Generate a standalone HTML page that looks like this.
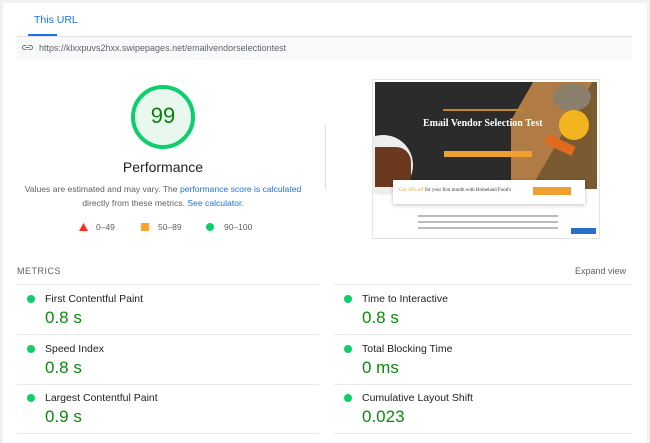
<!DOCTYPE html>
<html><head><style>
*{margin:0;padding:0;box-sizing:border-box}
body{width:650px;height:435px;background:#f1f1f1;font-family:"Liberation Sans",Arial,sans-serif;position:relative;overflow:hidden}
.card{position:absolute;left:3px;top:3px;width:644px;height:440px;background:#fff}
.a{position:absolute}
.t{white-space:nowrap}
.dot{width:8px;height:8px;border-radius:50%;background:#0cce6b}
.mt{font-size:10.5px;color:#212121}
.mv{font-size:17px;color:#0c8a0c}
.hl{height:1px;background:#ebebeb}
</style></head><body>
<div class="card"></div>
<div class="a t" style="left:34px;top:14px;font-size:10.5px;color:#1a73e8">This URL</div>
<div class="a" style="left:28px;top:34px;width:29px;height:2px;background:#1a73e8"></div>
<div class="a" style="left:17px;top:36px;width:615px;height:1px;background:#e0e0e0"></div>
<div class="a" style="left:17px;top:37px;width:615px;height:23px;background:#f8f9fa"></div>
<svg class="a" style="left:22px;top:44px" width="11" height="7" viewBox="0 0 22 14"><path d="M9 3H5a4 4 0 0 0 0 8h4M13 3h4a4 4 0 0 1 0 8h-4M7 7h8" stroke="#757575" stroke-width="2" fill="none"/></svg>
<div class="a t" style="left:39px;top:43px;font-size:9px;color:#5f6368">https://klxxpuvs2hxx.swipepages.net/emailvendorselectiontest</div>

<svg class="a" style="left:129px;top:83px" width="68" height="68"><circle cx="34" cy="34" r="30" fill="#e8f8ee" stroke="#0cce6b" stroke-width="4"/></svg>
<div class="a t" style="left:129px;top:103px;width:68px;text-align:center;font-size:22px;color:#0c7d0c">99</div>
<div class="a t" style="left:63px;top:159px;width:200px;text-align:center;font-size:14px;color:#212121">Performance</div>
<div class="a t" style="left:13px;top:182px;width:300px;text-align:center;font-size:8.6px;color:#616161;line-height:14px">Values are estimated and may vary. The <span style="color:#1a73e8">performance score is calculated</span><br>directly from these metrics. <span style="color:#1a73e8">See calculator.</span></div>
<svg class="a" style="left:79px;top:223px" width="9" height="8"><path d="M4.5 0L9 8H0z" fill="#ff2d1e"/></svg>
<div class="a t" style="left:96px;top:222px;font-size:8.5px;color:#616161">0–49</div>
<div class="a" style="left:141px;top:223px;width:8px;height:8px;background:#ffa426"></div>
<div class="a t" style="left:158px;top:222px;font-size:8.5px;color:#616161">50–89</div>
<div class="a dot" style="left:206px;top:223px"></div>
<div class="a t" style="left:224px;top:222px;font-size:8.5px;color:#616161">90–100</div>

<div class="a" style="left:325px;top:125px;width:1px;height:65px;background:#e0e0e0"></div>

<div class="a" style="left:372px;top:79px;width:228px;height:160px;border:1px solid #e4e4e4;background:#fff;overflow:hidden">
 <div class="a" style="left:2px;top:2px;width:222px;height:107px;background:#2b2b2b"></div>
 <div class="a" style="left:138px;top:2px;width:86px;height:107px;background:linear-gradient(120deg,#2b2b2b 0 15%,#b07b45 15% 55%,#7a5a30 55%)"></div>
 <div class="a" style="left:180px;top:3px;width:38px;height:28px;border-radius:50%;background:#8a7f6a"></div>
 <div class="a" style="left:186px;top:30px;width:30px;height:30px;border-radius:50%;background:#f2b51f"></div>
 <div class="a" style="left:172px;top:60px;width:30px;height:10px;background:#e06a1e;transform:rotate(25deg)"></div>
 <div class="a" style="left:-20px;top:55px;width:60px;height:60px;border-radius:50%;background:#eee"></div>
 <div class="a" style="left:2px;top:67px;width:36px;height:40px;background:#6b3a1e;border-radius:0 15px 0 0"></div>
 <div class="a t" style="left:50px;top:38px;font-family:'Liberation Serif',serif;font-size:10px;color:#fff;font-weight:bold">Email Vendor Selection Test</div>
 <div class="a" style="left:70px;top:29px;width:80px;height:2px;background:#c08a2a"></div>
 <div class="a" style="left:71px;top:71px;width:88px;height:6px;background:#f0a030"></div>
 <div class="a" style="left:20px;top:100px;width:192px;height:24px;background:#fff;box-shadow:0 1px 4px rgba(0,0,0,.25)"></div>
 <div class="a t" style="left:26px;top:108px;font-family:'Liberation Serif',serif;font-size:5px;color:#333"><span style="color:#f0a030">Get 50% off</span> for your first month with Homeland Food's</div>
 <div class="a" style="left:160px;top:107px;width:38px;height:8px;background:#f0a030"></div>
 <div class="a" style="left:45px;top:135px;width:140px;height:2px;background:#bbb"></div>
 <div class="a" style="left:45px;top:141px;width:140px;height:2px;background:#bbb"></div>
 <div class="a" style="left:45px;top:147px;width:140px;height:2px;background:#bbb"></div>
 <div class="a" style="left:198px;top:148px;width:25px;height:6px;background:#2a6fcf"></div>
</div>

<div class="a t" style="left:17px;top:266px;font-size:9px;color:#616161;letter-spacing:.5px">METRICS</div>
<div class="a t" style="left:575px;top:266px;font-size:9px;color:#616161">Expand view</div>

<div class="a hl" style="left:17px;top:284px;width:302px"></div>
<div class="a hl" style="left:334px;top:284px;width:298px"></div>
<div class="a hl" style="left:17px;top:334px;width:302px"></div>
<div class="a hl" style="left:334px;top:334px;width:298px"></div>
<div class="a hl" style="left:17px;top:384px;width:302px"></div>
<div class="a hl" style="left:334px;top:384px;width:298px"></div>
<div class="a hl" style="left:17px;top:433px;width:302px"></div>
<div class="a hl" style="left:334px;top:433px;width:298px"></div>

<div class="a dot" style="left:27px;top:295px"></div><div class="a t mt" style="left:45px;top:293px">First Contentful Paint</div><div class="a t mv" style="left:45px;top:308px">0.8 s</div>
<div class="a dot" style="left:27px;top:345px"></div><div class="a t mt" style="left:45px;top:343px">Speed Index</div><div class="a t mv" style="left:45px;top:358px">0.8 s</div>
<div class="a dot" style="left:27px;top:394px"></div><div class="a t mt" style="left:45px;top:392px">Largest Contentful Paint</div><div class="a t mv" style="left:45px;top:407px">0.9 s</div>

<div class="a dot" style="left:344px;top:295px"></div><div class="a t mt" style="left:362px;top:293px">Time to Interactive</div><div class="a t mv" style="left:362px;top:308px">0.8 s</div>
<div class="a dot" style="left:344px;top:345px"></div><div class="a t mt" style="left:362px;top:343px">Total Blocking Time</div><div class="a t mv" style="left:362px;top:358px">0 ms</div>
<div class="a dot" style="left:344px;top:394px"></div><div class="a t mt" style="left:362px;top:392px">Cumulative Layout Shift</div><div class="a t mv" style="left:362px;top:407px">0.023</div>
</body></html>
